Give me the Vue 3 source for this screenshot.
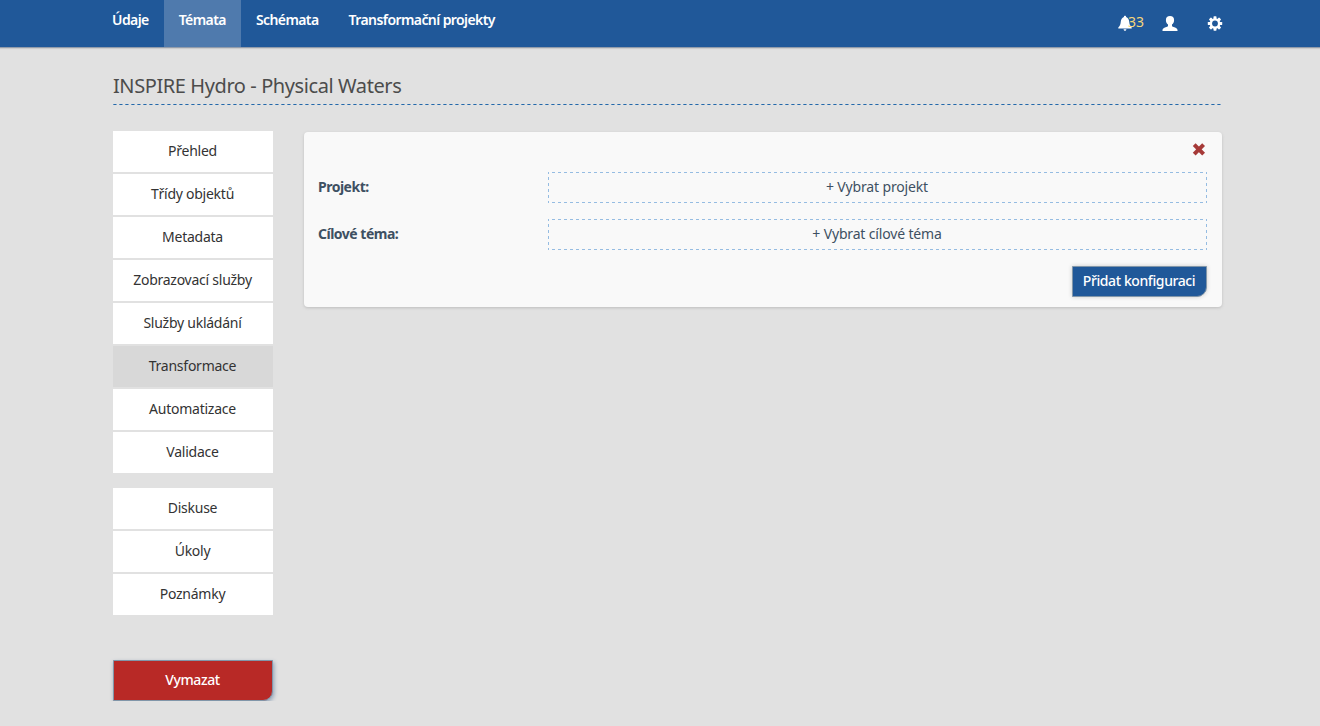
<script setup>
const nav = [
  { label: 'Údaje' },
  { label: 'Témata', active: true },
  { label: 'Schémata' },
  { label: 'Transformační projekty' },
]
const groups = [
  ['Přehled', 'Třídy objektů', 'Metadata', 'Zobrazovací služby', 'Služby ukládání', 'Transformace', 'Automatizace', 'Validace'],
  ['Diskuse', 'Úkoly', 'Poznámky'],
]
const fields = [
  { label: 'Projekt:', action: '+ Vybrat projekt' },
  { label: 'Cílové téma:', action: '+ Vybrat cílové téma' },
]
</script>

<template>
  <header class="topbar">
    <nav class="nav">
      <a v-for="n in nav" :key="n.label" class="nav-item" :class="{ active: n.active }">{{ n.label }}</a>
    </nav>
    <div class="tools">
      <span class="alerts">
        <svg width="14" height="16" viewBox="0 0 14 16"><path d="M7 .8c.7 0 1.100.5 1.100 1.200C10 2.600 10.900 4.300 11.200 6.500c.3 3 .8 4.500 2.500 6v.9H.3v-.9c1.700-1.500 2.200-3 2.500-6C3.100 4.300 4 2.600 5.900 2 5.900 1.300 6.300.8 7 .8zM5.600 14.200h2.800c0 .9-.5 1.500-1.400 1.500s-1.400-.6-1.400-1.500z" fill="#fff" /></svg>
        <span class="count">33</span>
      </span>
      <svg class="user" width="16" height="17" viewBox="0 0 16 17"><path d="M8 .9c2.600 0 4.100 1.500 4.100 4 0 2.100-.8 3.700-2.100 4.700v1.200c0 .7.600.9 1.600 1.300 2.200.8 3.900 1.500 3.900 2.900v.9H.5V15c0-1.400 1.700-2.100 3.900-2.900 1-.4 1.600-.6 1.600-1.300V9.600c-1.300-1-2.100-2.600-2.100-4.700 0-2.500 1.500-4 4.100-4z" fill="#fff" /></svg>
      <svg class="gear" width="16" height="17" viewBox="0 -0.500 16 17"><g fill="#fff"><rect v-for="a in 4" :key="a" x="6.500" y=".8" width="3" height="14.400" rx=".6" :transform="`rotate(${a * 45} 8 8)`" /><circle cx="8" cy="8" r="5.300" /></g><circle cx="8" cy="8" r="2.900" fill="#205899" /></svg>
    </div>
  </header>
  <main class="page">
    <h1 class="title">INSPIRE Hydro - Physical Waters</h1>
    <div class="columns">
      <aside class="side">
        <div v-for="(g, i) in groups" :key="i" class="menu">
          <a v-for="t in g" :key="t" class="menu-item" :class="{ current: t === 'Transformace' }">{{ t }}</a>
        </div>
        <button class="btn danger">Vymazat</button>
      </aside>
      <section class="card">
        <div class="close">
          <svg width="14" height="14" viewBox="0 0 14 14"><path d="M2.200 2.700l9.400 9.400M11.600 2.700l-9.400 9.400" stroke="#a63a38" stroke-width="4" /></svg>
        </div>
        <div v-for="f in fields" :key="f.label" class="row">
          <label class="label">{{ f.label }}</label>
          <div class="picker">{{ f.action }}</div>
        </div>
        <div class="actions"><button class="btn primary">Přidat konfiguraci</button></div>
      </section>
    </div>
  </main>
</template>

<style>
body { margin: 0; background: #e1e1e1; }
</style>

<style scoped>
.topbar, .page { font-family: "Noto Sans", "Open Sans", sans-serif; font-size: 14px; line-height: 20px; box-sizing: border-box; }
.topbar { display: flex; justify-content: space-between; height: 48px; padding: 0 97px 0 97px; background: #205899; border-bottom: 1px solid #929cab; box-shadow: 0 1px 1px #ccc; }
.nav { display: flex; }
.nav-item { padding: 10px 15px 17px; color: #fff; font-weight: 600; letter-spacing: -0.58px; white-space: nowrap; }
.nav-item.active { background: #4f7aad; }
.tools { display: flex; align-items: flex-start; }
.tools svg { display: block; }
.alerts { display: flex; margin: 15px 18px 0 0; }
.count { color: #f5d67b; line-height: 14px; margin-left: -4px; }
.user { margin: 15px 29px 0 0; }
.gear { margin: 15px 0 0; }
.page { width: 1110px; margin-left: 113px; }
.title { margin: 0; height: 57px; box-sizing: border-box; padding-top: 23px; background: repeating-linear-gradient(90deg, #5f90bf 0 1px, #2468a8 1px 3px, #7ba2c9 3px 4px, transparent 4px 6px) 0 100% / 100% 1px no-repeat; font-size: 20px; font-weight: 400; letter-spacing: -0.41px; line-height: 30px; color: #4c4c4c; }
.columns { display: flex; align-items: flex-start; gap: 31px; padding-top: 26px; }
.side { width: 160px; display: flex; flex-direction: column; gap: 15px; }
.menu { display: flex; flex-direction: column; gap: 2px; }
.menu-item { height: 41px; line-height: 40px; padding-right: 1px; background: #fff; text-align: center; color: #333; letter-spacing: -0.25px; white-space: nowrap; }
.menu-item.current { background: #d8d8d8; }
.btn { font: inherit; font-weight: 500; color: #fff; padding: 0 1px 2px 0; box-sizing: border-box; border: 1px solid #8196a9; border-bottom-right-radius: 10px; letter-spacing: -0.4px; white-space: nowrap; }
.danger { height: 41px; margin-top: 30px; background: #b82926; box-shadow: 1px 2px 4px #8c9fb5; }
.primary { width: 135px; height: 31px; background: #205899; box-shadow: 0 0 4px #ccc; }
.card { width: 918px; height: 175px; margin-top: 1px; box-sizing: border-box; padding: 10px 15px 10px 14px; background: #f9f9f9; border-radius: 4px; box-shadow: 0 1px 3px #bfbfbf; }
.close { display: flex; justify-content: flex-end; height: 30px; padding-right: 1px; }
.row { display: flex; height: 31px; margin-bottom: 16px; }
.label { width: 230px; line-height: 30px; font-weight: 700; letter-spacing: -0.5px; color: #3e5062; }
.picker {
  --h: linear-gradient(90deg, #95bce2 50%, transparent 50%);
  --v: linear-gradient(#95bce2 50%, transparent 50%);
  flex: 1; box-sizing: border-box; padding-right: 1px; text-align: center; line-height: 30px; letter-spacing: -0.16px; color: #3e5062;
  background-image: var(--h), var(--h), var(--v), var(--v);
  background-size: 6px 1px, 6px 1px, 1px 6px, 1px 6px;
  background-position: -2px 0, -2px 30px, 0 -1px, 658px -1px;
  background-repeat: repeat-x, repeat-x, repeat-y, repeat-y;
}
.actions { display: flex; justify-content: flex-end; }
</style>
